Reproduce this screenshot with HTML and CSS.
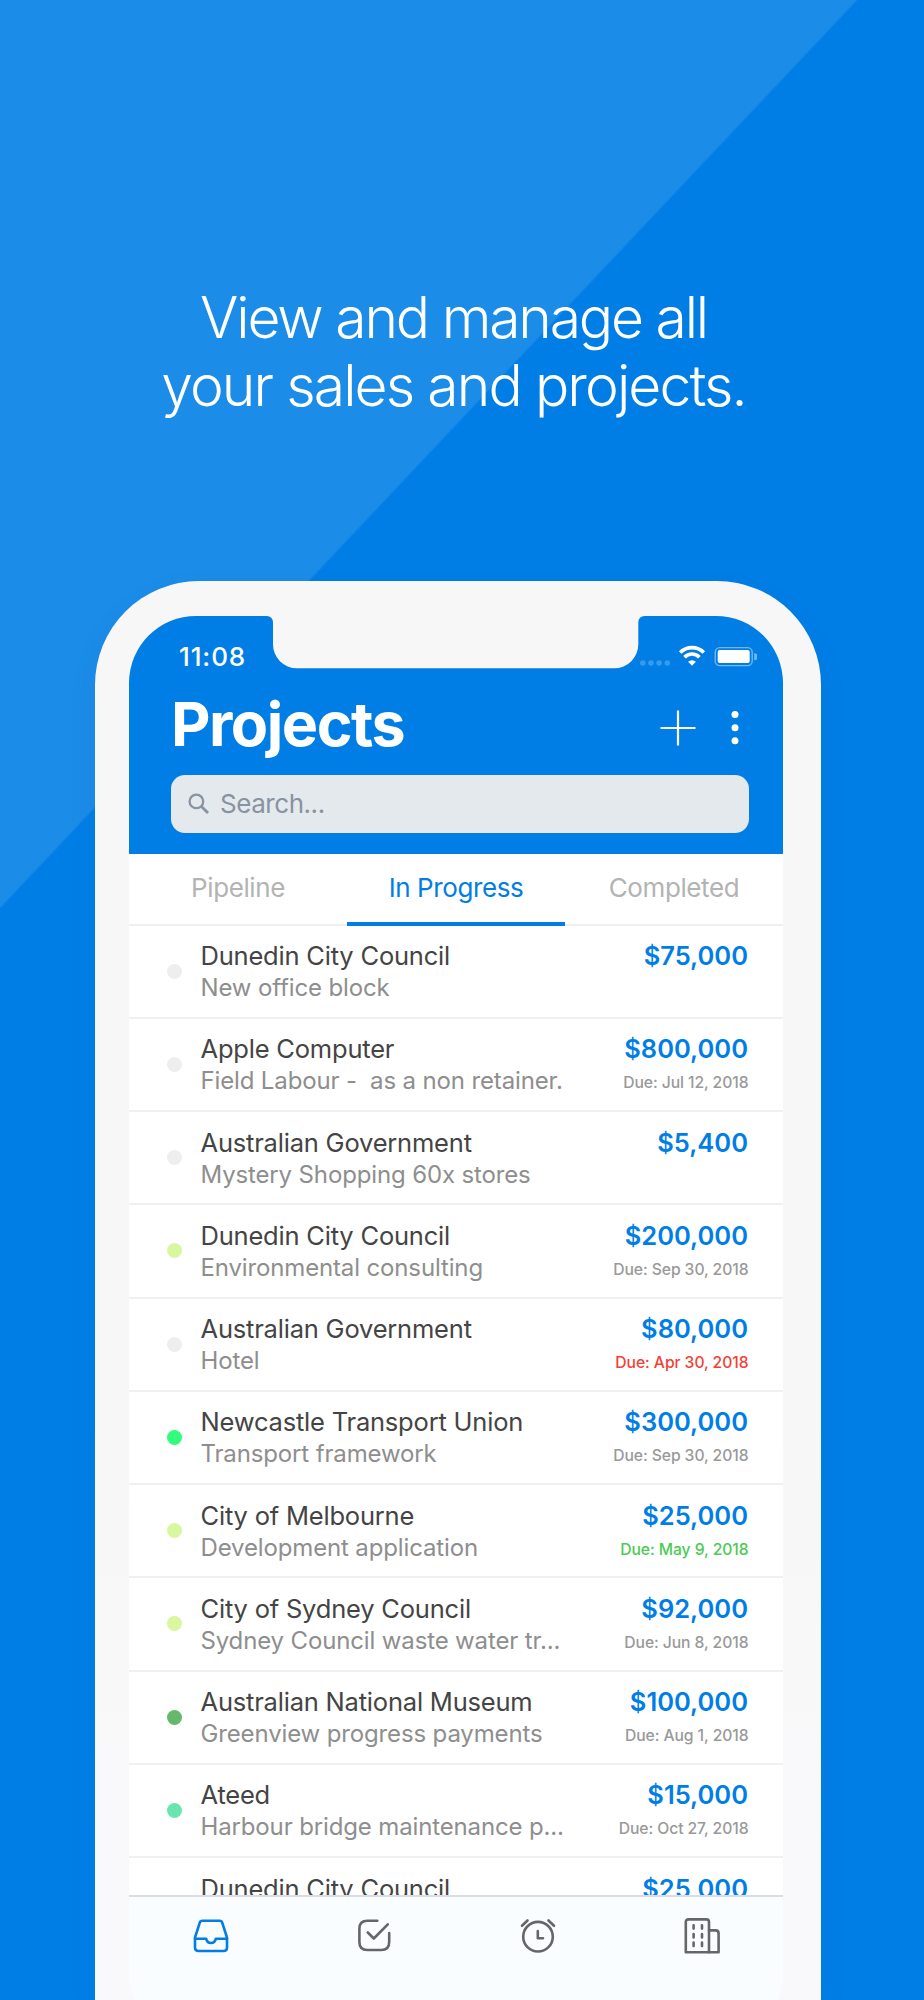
FILE: index.html
```
<!DOCTYPE html>
<html lang="en">
<head>
  <meta charset="UTF-8">
  <meta name="viewport" content="width=device-width, initial-scale=1.0">
  <title>Projects</title>
  <link rel="stylesheet" href="styles.css">
</head>
<body>

  <h1><span class="line-one">View and manage all</span><br><span class="line-two">your sales and projects.</span></h1>

  <div class="phone">
    <div class="screen">
      <svg class="notch" width="378" height="53" viewBox="0 0 378 53">
        <path d="M0 0A6 6 0 0 1 6 6V28A24 24 0 0 0 30 52.3H347.3A24 24 0 0 0 371.3 28V6A6 6 0 0 1 377.3 0Z" fill="#f7f7f7"/>
      </svg>

      <header>
        <div class="status-bar">
          <span class="time">11:08</span>
          <svg class="status-icons" width="120" height="24" viewBox="0 0 120 24" fill="#fff">
            <g opacity="0.22">
              <circle cx="5.8" cy="18" r="2.8"/>
              <circle cx="14" cy="18" r="2.8"/>
              <circle cx="22.1" cy="18" r="2.8"/>
              <circle cx="30.3" cy="18" r="2.8"/>
            </g>
            <g fill="none" stroke="#fff" stroke-width="3.6">
              <path d="M43.2 7.6A16.5 16.5 0 0 1 66.8 7.6"/>
              <path d="M47.6 12.2A10.3 10.3 0 0 1 62.4 12.2"/>
            </g>
            <path d="M55 20.8L51.1 16.8A5.6 5.6 0 0 1 58.9 16.8Z"/>
            <rect x="78.2" y="2.6" width="37" height="18" rx="4.6" fill="none" stroke="#fff" stroke-width="1.4" opacity="0.45"/>
            <rect x="80.7" y="5" width="32" height="13" rx="2"/>
            <path d="M117.2 8.2A3.4 3.4 0 0 1 117.2 15.2Z" opacity="0.45"/>
          </svg>
        </div>

        <div class="title-row">
          <h2>Projects</h2>
          <div class="actions">
            <svg width="36" height="36" viewBox="0 0 36 36" stroke="#fff" stroke-width="2.2">
              <path d="M18 0.5V35.5M0.5 18H35.5"/>
            </svg>
            <svg width="8" height="36" viewBox="0 0 8 36" fill="#fff">
              <circle cx="4" cy="4.6" r="3.5"/>
              <circle cx="4" cy="17.7" r="3.5"/>
              <circle cx="4" cy="30.8" r="3.5"/>
            </svg>
          </div>
        </div>

        <div class="search">
          <svg width="22" height="22" viewBox="0 0 22 22" fill="none" stroke="#8793a0" stroke-width="2.3">
            <circle cx="8.4" cy="8.4" r="6.8"/>
            <path d="M13.2 13.2L20 20" stroke-width="2.8"/>
          </svg>
          <span>Search...</span>
        </div>
      </header>

      <nav class="tabs">
        <a>Pipeline</a>
        <a class="active">In Progress</a>
        <a>Completed</a>
      </nav>

      <div class="list">
        <div class="row">
          <span class="dot"></span>
          <div class="info"><div class="name">Dunedin City Council</div><div class="job">New office block</div></div>
          <div class="value"><div class="money">$75,000</div></div>
        </div>
        <div class="row">
          <span class="dot"></span>
          <div class="info"><div class="name">Apple Computer</div><div class="job">Field Labour -  as a non retainer.</div></div>
          <div class="value"><div class="money">$800,000</div><div class="due">Due: Jul 12, 2018</div></div>
        </div>
        <div class="row">
          <span class="dot"></span>
          <div class="info"><div class="name">Australian Government</div><div class="job">Mystery Shopping 60x stores</div></div>
          <div class="value"><div class="money">$5,400</div></div>
        </div>
        <div class="row">
          <span class="dot lime"></span>
          <div class="info"><div class="name">Dunedin City Council</div><div class="job">Environmental consulting</div></div>
          <div class="value"><div class="money">$200,000</div><div class="due">Due: Sep 30, 2018</div></div>
        </div>
        <div class="row">
          <span class="dot"></span>
          <div class="info"><div class="name">Australian Government</div><div class="job">Hotel</div></div>
          <div class="value"><div class="money">$80,000</div><div class="due late">Due: Apr 30, 2018</div></div>
        </div>
        <div class="row">
          <span class="dot green"></span>
          <div class="info"><div class="name">Newcastle Transport Union</div><div class="job">Transport framework</div></div>
          <div class="value"><div class="money">$300,000</div><div class="due">Due: Sep 30, 2018</div></div>
        </div>
        <div class="row">
          <span class="dot lime"></span>
          <div class="info"><div class="name">City of Melbourne</div><div class="job">Development application</div></div>
          <div class="value"><div class="money">$25,000</div><div class="due soon">Due: May 9, 2018</div></div>
        </div>
        <div class="row">
          <span class="dot lime"></span>
          <div class="info"><div class="name">City of Sydney Council</div><div class="job">Sydney Council waste water tr...</div></div>
          <div class="value"><div class="money">$92,000</div><div class="due">Due: Jun 8, 2018</div></div>
        </div>
        <div class="row">
          <span class="dot forest"></span>
          <div class="info"><div class="name">Australian National Museum</div><div class="job">Greenview progress payments</div></div>
          <div class="value"><div class="money">$100,000</div><div class="due">Due: Aug 1, 2018</div></div>
        </div>
        <div class="row">
          <span class="dot mint"></span>
          <div class="info"><div class="name">Ateed</div><div class="job">Harbour bridge maintenance p...</div></div>
          <div class="value"><div class="money">$15,000</div><div class="due">Due: Oct 27, 2018</div></div>
        </div>
        <div class="row">
          <span class="dot hidden"></span>
          <div class="info"><div class="name">Dunedin City Council</div></div>
          <div class="value"><div class="money">$25,000</div></div>
        </div>
      </div>

      <footer>
        <a class="active">
          <svg width="36" height="36" viewBox="0 0 36 36">
            <path d="M9.3 2.8H26.7Q28.6 2.8 29.3 4.8L34 19.5V29.5Q34 33 30.5 33H5.5Q2 33 2 29.5V19.5L6.7 4.8Q7.4 2.8 9.3 2.8Z"/>
            <path d="M2 20.8H13.2Q14 25 18 25T22.8 20.8H34"/>
          </svg>
        </a>
        <a>
          <svg width="36" height="36" viewBox="0 0 36 36">
            <path d="M21.3 2.8H11.3Q3.4 2.8 3.4 10.7V24Q3.4 32 11.3 32H25.3Q33.2 32 33.2 24V15"/>
            <path d="M11.8 14.5L17.8 20.5L31.8 6.3"/>
          </svg>
        </a>
        <a>
          <svg width="36" height="36" viewBox="0 0 36 36">
            <circle cx="18" cy="18.7" r="14.8"/>
            <path d="M17.8 13V20.3H23M2 7.8L7.5 2.5M34 7.8L28.5 2.5"/>
          </svg>
        </a>
        <a>
          <svg width="37" height="36" viewBox="-1 0 37 36">
            <path d="M1.8 34.2V4Q1.8 1.4 4.4 1.4H22.4Q25 1.4 25 4V34.2Z"/>
            <path d="M25 12.4H31.6Q34.6 12.4 34.6 15.4V34.2H25"/>
            <path d="M9.6 7.4V10.6M9.6 16V19.4M9.6 24.6V28M18 7.4V10.6M18 16V19.4M18 24.6V28"/>
          </svg>
        </a>
      </footer>
    </div>
  </div>

</body>
</html>
```
FILE: styles.css
```
* {
  box-sizing: border-box;
}

body {
  margin: 0;
  height: 2000px;
  overflow: hidden;
  font-family: Inter, 'Liberation Sans', sans-serif;
  background-color: #007ee6;
  background-image: linear-gradient(to bottom right, #1c8ce9 49.9%, transparent 50.1%);
  background-size: 857px 908px;
  background-repeat: no-repeat;
}

h1 {
  margin: 0;
  height: 580.5px;
  padding-top: 284px;
  padding-right: 17px;
  color: #fff;
  font-size: 57px;
  font-weight: 300;
  line-height: 68px;
  text-align: center;
  white-space: nowrap;
}

.line-one {
  letter-spacing: -2.2px;
}

.line-two {
  letter-spacing: -1.9px;
}

.phone {
  width: 725.5px;
  height: 1419.5px;
  margin-left: 95.2px;
  padding: 35.5px 37.5px 0 33.8px;
  border-radius: 104px 104px 0 0;
  overflow: hidden;
  background: linear-gradient(#f7f7f7 60%, #f9f9fb 90%);
  box-shadow: 0 12px 36px rgba(0, 0, 0, 0.04);
}

.screen {
  position: relative;
  width: 654px;
  height: 1424px;
  border-radius: 67px;
  overflow: hidden;
  background-color: #fff;
}

.notch {
  position: absolute;
  top: -0.3px;
  left: 138.5px;
}

header {
  height: 238px;
  background-color: #007ee6;
  color: #fff;
  padding: 0 35px 0 42px;
}

.status-bar {
  height: 80px;
  padding: 25px 0 0 8px;
  display: flex;
  justify-content: space-between;
}

.time {
  font-size: 26px;
  font-weight: 500;
  line-height: 32px;
  letter-spacing: 0.9px;
}

.status-icons {
  margin: 4px -9.5px 0 0;
}

.title-row {
  height: 79px;
  display: flex;
  justify-content: space-between;
}

h2 {
  margin: -9px 0 0 0;
  font-size: 61px;
  font-weight: 700;
  line-height: 74px;
  letter-spacing: -1.5px;
}

.actions {
  display: flex;
  gap: 35px;
  margin: 14px 8.5px 0 0;
}

.search {
  width: 578px;
  height: 58px;
  border-radius: 14px;
  background-color: #e4e9ee;
  color: #8793a0;
  display: flex;
  align-items: center;
  gap: 10px;
  padding: 0 0 1px 17px;
  font-size: 26px;
  letter-spacing: -0.45px;
}

.tabs {
  height: 71.5px;
  display: flex;
  border-bottom: 2px solid #f0f0f1;
}

.tabs a {
  flex: 1;
  height: 71.5px;
  text-align: center;
  font-size: 26px;
  line-height: 67px;
  letter-spacing: -0.4px;
  color: #b3b3b3;
}

.tabs .active {
  color: #007ee6;
  border-bottom: 4px solid #007ee6;
}

.list {
  height: 969.5px;
  overflow: hidden;
}

.row {
  height: 93.27px;
  display: flex;
  padding: 14.5px 35px 0 38px;
  border-bottom: 2px solid #f0f0f1;
}

.dot {
  width: 15px;
  height: 15px;
  margin: 23.5px 18.5px 0 0;
  border-radius: 50%;
  background-color: #eee;
  flex-shrink: 0;
}

.lime {
  background-color: #d9f7a0;
}

.green {
  background-color: #33fc7c;
}

.forest {
  background-color: #66b96a;
}

.mint {
  background-color: #69e6b0;
}

.hidden {
  visibility: hidden;
}

.info {
  flex: 1;
  white-space: pre;
}

.name {
  font-size: 25.5px;
  line-height: 31px;
  letter-spacing: -0.2px;
  color: #444;
}

.job {
  font-size: 24px;
  line-height: 34px;
  letter-spacing: -0.14px;
  color: #8e8e8e;
}

.value {
  text-align: right;
  white-space: nowrap;
}

.money {
  font-size: 25.5px;
  font-weight: 600;
  line-height: 32px;
  color: #007ee6;
}

.due {
  margin-right: -0.5px;
  font-size: 15.7px;
  font-weight: 500;
  line-height: 36px;
  letter-spacing: -0.08px;
  color: #999;
}

.late {
  color: #f43f36;
}

.soon {
  color: #4ccb52;
}

footer {
  height: 145px;
  border-top: 2px solid #dadde3;
  background-color: #fafdff;
  display: flex;
}

footer a {
  flex: 1;
  display: flex;
  justify-content: center;
  padding-top: 21px;
  color: #666;
}

footer .active {
  color: #007ee6;
}

footer svg {
  fill: none;
  stroke: currentColor;
  stroke-width: 2.6;
  stroke-linecap: round;
  stroke-linejoin: round;
}
```
